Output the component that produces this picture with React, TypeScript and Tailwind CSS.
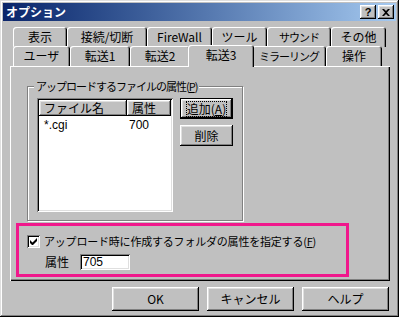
import React from "react";

const raised =
  "shadow-[inset_-1px_-1px_#000,inset_1px_1px_#fff,inset_-2px_-2px_#808080,inset_2px_2px_#dfdfdf]";
const sunken =
  "shadow-[inset_1px_1px_#808080,inset_-1px_-1px_#fff,inset_2px_2px_#000,inset_-2px_-2px_#dfdfdf]";
const tabShadow =
  "shadow-[inset_1px_1px_#fff,inset_-1px_0_#000,inset_-2px_0_#808080]";

function Tab({ label, w, selected, narrow }: { label: string; w: number; selected?: boolean; narrow?: boolean }) {
  return (
    <div
      style={{ width: w }}
      className={
        "flex items-center justify-center whitespace-nowrap rounded-t-[3px] bg-[#c0c0c0] " +
        tabShadow +
        (selected ? " relative z-10 -mx-[2px] h-[22px] top-[1px]" : " h-[20px]")
      }
    >
      <span className={(selected ? "-mt-[2px] " : "") + (narrow ? "text-[11px] tracking-[-1px]" : "")}>{label}</span>
    </div>
  );
}

function Btn({ children, w, def }: { children: React.ReactNode; w: number; def?: boolean }) {
  return (
    <div
      style={{ width: w }}
      className={
        "flex h-[21px] items-center justify-center whitespace-nowrap bg-[#c0c0c0] " +
        (def
          ? "shadow-[inset_1px_1px_#000,inset_-1px_-1px_#000,inset_-2px_-2px_#000,inset_2px_2px_#fff,inset_-3px_-3px_#808080,inset_3px_3px_#dfdfdf]"
          : raised)
      }
    >
      {children}
    </div>
  );
}

export default function App() {
  return (
    <div
      className={
        "flex h-[317px] w-[399px] flex-col bg-[#c0c0c0] p-[3px] text-[12px] leading-[14px] text-black " +
        "shadow-[inset_-1px_-1px_#000,inset_1px_1px_#dfdfdf,inset_-2px_-2px_#808080,inset_2px_2px_#fff]"
      }
      style={{ fontFamily: '"Noto Sans CJK JP", "Liberation Sans", sans-serif' }}
    >
      {/* title bar */}
      <div className="flex h-[18px] items-center bg-gradient-to-r from-[#0a246a] to-[#a6caf0] pl-[3px] pr-[2px]">
        <span className="font-bold text-white">オプション</span>
        <div className="ml-auto flex gap-[2px]">
          <div className={"flex h-[14px] w-[16px] items-center justify-center bg-[#c0c0c0] text-[11px] font-bold " + raised}>
            <span style={{ fontFamily: '"Liberation Sans", sans-serif' }}>?</span>
          </div>
          <div className={"flex h-[14px] w-[16px] items-center justify-center bg-[#c0c0c0] " + raised}>
            <svg width="8" height="7" viewBox="0 0 8 7">
              <path d="M0 0h2l2 2 2-2h2L5 3.5 8 7H6L4 5 2 7H0l3-3.5z" fill="#000" />
            </svg>
          </div>
        </div>
      </div>

      {/* tabs */}
      <div className="ml-[10px] mt-[6px] flex h-[20px]">
        <Tab label="表示" w={54} />
        <Tab label="接続/切断" w={80} />
        <Tab label="FireWall" w={65} />
        <Tab label="ツール" w={55} />
        <Tab label="サウンド" w={64} narrow />
        <Tab label="その他" w={55} />
      </div>
      <div className="ml-[10px] flex h-[19px] items-end">
        <Tab label="ユーザ" w={57} />
        <Tab label="転送1" w={60} />
        <Tab label="転送2" w={60} />
        <Tab label="転送3" w={66} selected />
        <Tab label="ミラーリング" w={74} narrow />
        <Tab label="操作" w={56} />
      </div>

      {/* panel */}
      <div className="ml-[7px] flex h-[215px] w-[380px] flex-col bg-[#c0c0c0] shadow-[inset_1px_1px_#fff,inset_-1px_-1px_#000,inset_-2px_-2px_#808080]">
        <fieldset className="ml-[17px] mt-[13px] h-[142px] w-[216px] border border-[#808080] px-[9px] shadow-[1px_1px_0_#fff,inset_1px_1px_#fff]">
          <legend className="-ml-[3px] whitespace-nowrap bg-[#c0c0c0] px-[2px] text-[11px] tracking-[-1px]">
            アップロードするファイルの属性(<span className="underline">P</span>)
          </legend>
          <div className="mt-[5px] flex gap-[7px]">
            <div className={"flex h-[114px] w-[136px] flex-col bg-white p-[2px] " + sunken}>
              <div className="flex h-[16px]">
                <div className={"flex w-[88px] items-center bg-[#c0c0c0] pl-[5px] " + raised}>ファイル名</div>
                <div className={"flex flex-1 items-center bg-[#c0c0c0] pl-[5px] " + raised}>属性</div>
              </div>
              <div className="mt-[2px] flex h-[14px]">
                <div className="w-[88px] pl-[5px]" style={{ fontFamily: '"Liberation Sans", sans-serif' }}>*.cgi</div>
                <div className="pl-[2px]" style={{ fontFamily: '"Liberation Sans", sans-serif' }}>700</div>
              </div>
            </div>
            <div className="flex flex-col gap-[6px]">
              <Btn w={53} def>
                <span className="outline-1 outline-dotted outline-black">
                  追加(<span className="underline">A</span>)
                </span>
              </Btn>
              <Btn w={53}>削除</Btn>
            </div>
          </div>
        </fieldset>

        <div className="ml-[6px] mt-[2px] flex h-[54px] w-[333px] flex-col border-[3px] border-[#f0188c] pl-[8px] pt-[8px]">
          <div className="flex items-center gap-[4px]">
            <div className={"flex h-[13px] w-[13px] shrink-0 items-center justify-center bg-white " + sunken}>
              <svg width="7" height="7" viewBox="0 0 7 7">
                <path d="M0 2v3l2 2h1l4-4V0L2.5 4.5z" fill="#000" />
              </svg>
            </div>
            <span className="whitespace-nowrap text-[11px] tracking-[-0.2px]">
              アップロード時に作成するフォルダの属性を指定する(<span className="underline">F</span>)
            </span>
          </div>
          <div className="mt-[6px] flex items-center">
            <span className="ml-[18px] w-[35px]">属性</span>
            <div
              className={"flex h-[16px] w-[50px] items-center bg-white pl-[3px] " + sunken}
              style={{ fontFamily: '"Liberation Sans", sans-serif' }}
            >
              705
            </div>
          </div>
        </div>
      </div>

      {/* buttons */}
      <div className="mt-[6px] flex gap-[8px] pl-[109px]">
        <div className={"flex h-[24px] w-[87px] items-center justify-center bg-[#c0c0c0] " + raised}>OK</div>
        <div className={"flex h-[24px] w-[87px] items-center justify-center bg-[#c0c0c0] " + raised}>キャンセル</div>
        <div className={"flex h-[24px] w-[87px] items-center justify-center bg-[#c0c0c0] " + raised}>ヘルプ</div>
      </div>
    </div>
  );
}
